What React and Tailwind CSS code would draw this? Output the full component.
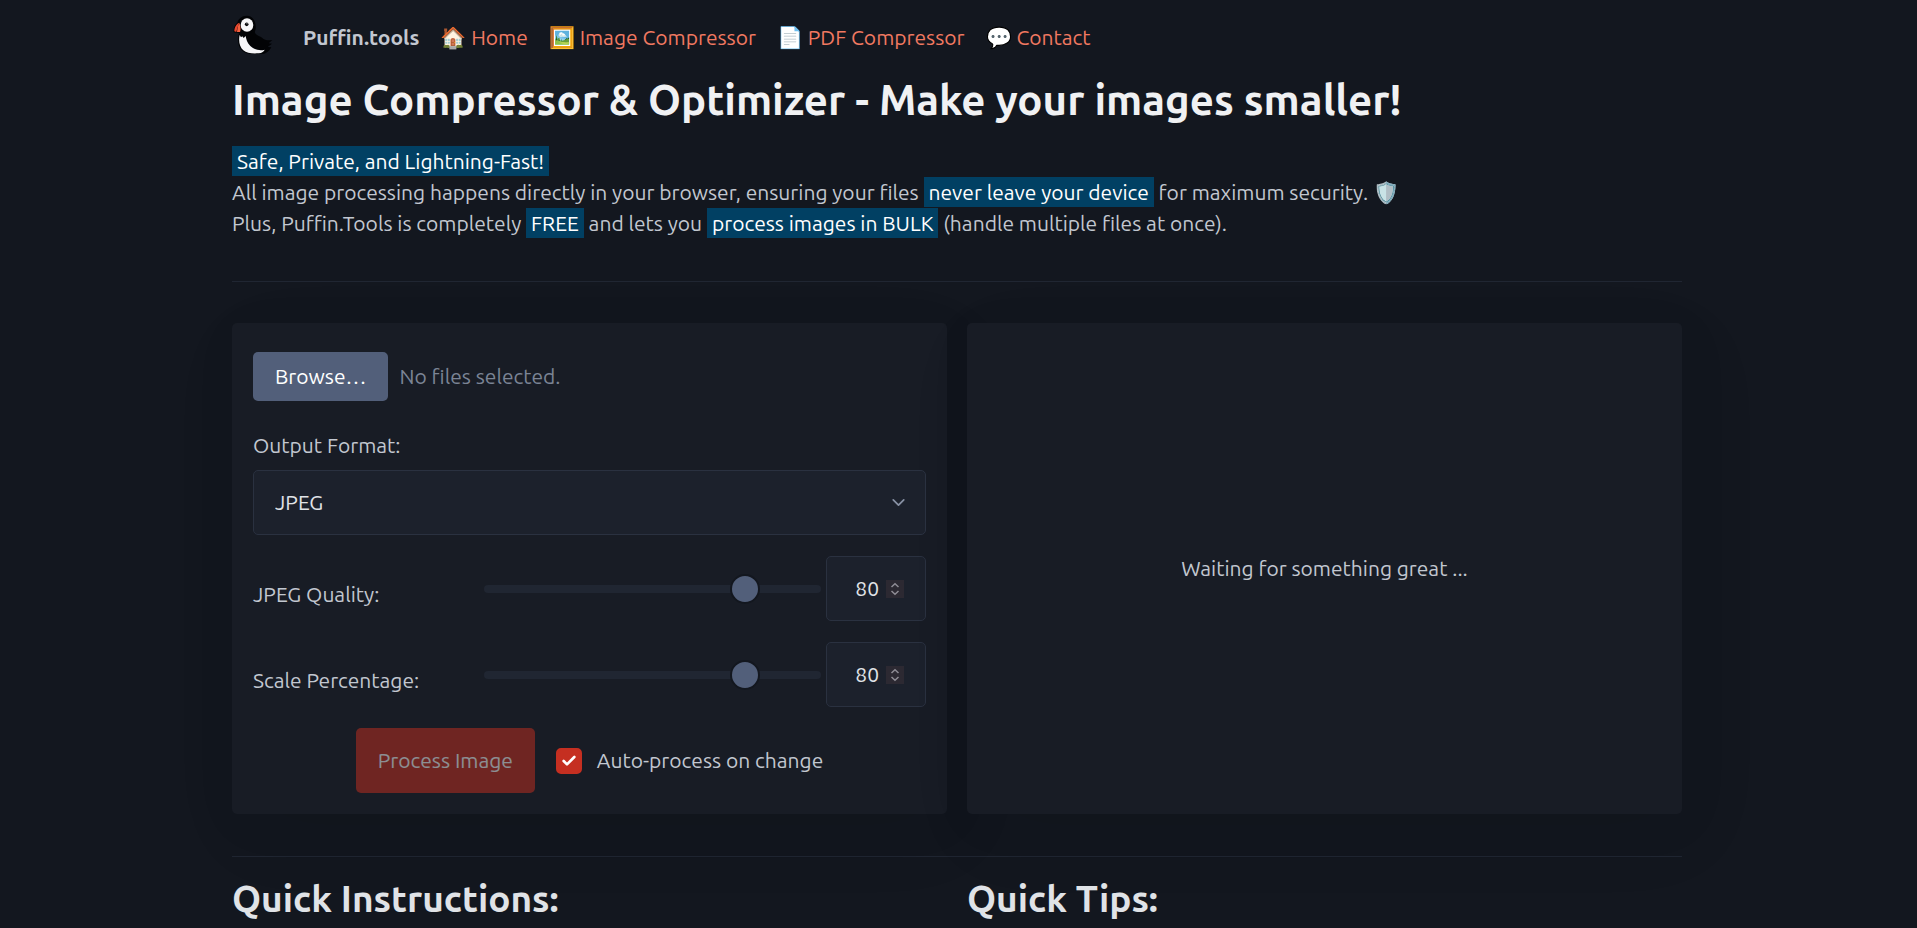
import { useRef, useState } from "react";
import { ChevronDown } from "lucide-react";

const LINKS = [
  { icon: "🏠", label: "Home" },
  { icon: "🖼️", label: "Image Compressor" },
  { icon: "📄", label: "PDF Compressor" },
  { icon: "💬", label: "Contact" },
];

export default function App() {
  const [quality, setQuality] = useState(80);
  const [scale, setScale] = useState(80);
  const fileRef = useRef(null);

  return (
    <div className="min-h-screen bg-[#13171f] pr-[3px] font-[Ubuntu,'Noto_Sans',sans-serif] text-[21px] leading-[31px] text-[#c2c7d0]">
      <div className="mx-auto max-w-[1450px] pt-3">
        <Navbar />

        <main>
          {/* Intro */}
          <section>
            <h1 className="mt-[14px] text-[42px] leading-[47px] font-semibold text-[#f0f1f3]">
              Image Compressor &amp; Optimizer - Make your images smaller!
            </h1>
            <p className="mt-[23px]">
              <Mark>Safe, Private, and Lightning-Fast!</Mark>
              <br />
              All image processing happens directly in your browser, ensuring your files{" "}
              <Mark>never leave your device</Mark> for maximum security. 🛡️
              <br />
              Plus, Puffin.Tools is completely <Mark>FREE</Mark> and lets you{" "}
              <Mark>process images in BULK</Mark> (handle multiple files at once).
            </p>
          </section>

          <hr className="mt-[42px] border-[#202632]" />

          {/* Tool */}
          <section className="mt-[41px] grid grid-cols-2 gap-5">
            <Card>
              <form className="flex flex-col gap-[21px]" onSubmit={(e) => e.preventDefault()}>
                <div className="flex h-[65px] items-center gap-[11px]">
                  <button
                    type="button"
                    onClick={() => fileRef.current.click()}
                    className="h-[49px] rounded-[5px] bg-[#525f7a] px-[22px] text-white"
                  >
                    Browse…
                  </button>
                  <label htmlFor="files" className="text-[#7b8495]">No files selected.</label>
                  <input ref={fileRef} id="files" type="file" multiple className="hidden" />
                </div>

                <div>
                  <label htmlFor="format" className="mb-[9px] block">Output Format:</label>
                  <div className="relative">
                    <select
                      id="format"
                      className="h-[65px] w-full appearance-none rounded-[5px] border border-[#2a3140] bg-[#1c212c] px-[21px] text-[#e0e3e7]"
                    >
                      <option>JPEG</option>
                      <option>PNG</option>
                      <option>WEBP</option>
                    </select>
                    <ChevronDown size={21} className="pointer-events-none absolute top-[22px] right-[17px] text-[#8891a4]" />
                  </div>
                </div>

                <RangeField id="quality" label="JPEG Quality:" value={quality} onChange={setQuality} />
                <RangeField id="scale" label="Scale Percentage:" value={scale} onChange={setScale} />

                <div className="flex items-center justify-center gap-[21px]">
                  <button
                    type="submit"
                    disabled
                    className="h-[65px] rounded-[5px] bg-[#c52f21] px-[22px] text-white opacity-50"
                  >
                    Process Image
                  </button>
                  <div className="flex items-center gap-[15px]">
                    <span className="relative flex">
                      <input
                        id="auto"
                        type="checkbox"
                        defaultChecked
                        className="peer size-[26px] appearance-none rounded-[5px] border-2 border-[#2a3140] bg-[#1c212c] checked:border-[#c52f21] checked:bg-[#c52f21]"
                      />
                      <svg
                        viewBox="0 0 24 24"
                        className="pointer-events-none absolute inset-[5px] hidden size-4 fill-none stroke-white stroke-4 peer-checked:block"
                        strokeLinecap="round"
                        strokeLinejoin="round"
                      >
                        <polyline points="20 6 9 17 4 12" />
                      </svg>
                    </span>
                    <label htmlFor="auto">Auto-process on change</label>
                  </div>
                </div>
              </form>
            </Card>

            <Card>
              <div className="flex h-full items-center justify-center">
                <p>Waiting for something great ...</p>
              </div>
            </Card>
          </section>

          <hr className="mt-[42px] border-[#202632]" />

          {/* Help */}
          <section className="mt-[21px] grid grid-cols-2 gap-5 text-[37px] leading-[42px] text-[#e0e3e7]">
            <h2 className="font-semibold">Quick Instructions:</h2>
            <h2 className="font-semibold">Quick Tips:</h2>
          </section>
        </main>
      </div>
    </div>
  );
}

function Navbar() {
  return (
    <nav className="flex h-[50px] items-center gap-[21px]">
      <PuffinLogo />
      <strong className="font-semibold">Puffin.tools</strong>
      {LINKS.map((link) => (
        <a key={link.label} href="#" className="text-[#f17961]">
          {link.icon} {link.label}
        </a>
      ))}
    </nav>
  );
}

function Mark({ children }) {
  return <mark className="bg-[#014063] px-[5px] py-[3px] text-white">{children}</mark>;
}

function Card({ children }) {
  return (
    <article className="rounded-[5px] bg-[#181c25] p-[21px] shadow-[5px_9px_55px_rgba(7,9,12,0.04),10px_21px_80px_rgba(7,9,12,0.06)]">
      {children}
    </article>
  );
}

function RangeField({ id, label, value, onChange }) {
  const update = (e) => onChange(Number(e.target.value));

  return (
    <div className="flex items-center">
      <label htmlFor={id} className="w-[231px] pt-3">{label}</label>
      <input
        id={id}
        type="range"
        min="0"
        max="100"
        value={value}
        onChange={update}
        className="mr-[5px] h-[30px] min-w-0 flex-1 appearance-none bg-transparent [&::-webkit-slider-runnable-track]:h-2 [&::-webkit-slider-runnable-track]:rounded-[5px] [&::-webkit-slider-runnable-track]:bg-[#202632] [&::-webkit-slider-thumb]:-mt-[11px] [&::-webkit-slider-thumb]:size-[30px] [&::-webkit-slider-thumb]:appearance-none [&::-webkit-slider-thumb]:rounded-full [&::-webkit-slider-thumb]:border-2 [&::-webkit-slider-thumb]:border-[#13171f] [&::-webkit-slider-thumb]:bg-[#525f7a]"
      />
      <div className="flex h-[65px] w-[100px] items-center gap-[7px] rounded-[5px] border border-[#2a3140] bg-[#1c212c] pr-[21px]">
        <input
          type="number"
          aria-label={label}
          value={value}
          onChange={update}
          className="w-0 flex-1 appearance-none text-right text-[#e0e3e7] [-moz-appearance:textfield] [&::-webkit-inner-spin-button]:appearance-none"
        />
        <svg viewBox="0 0 18 18" className="size-[18px] bg-[#2c2932] fill-none stroke-[#8f8d95] stroke-[1.5]">
          <path d="M5.5 7 9 3.8 12.5 7M5.5 11 9 14.2 12.5 11" />
        </svg>
      </div>
    </div>
  );
}

function PuffinLogo() {
  return (
    <svg viewBox="12 6 150 150" className="size-[50px]" aria-label="Puffin.tools logo">
      {/* body, wing and tail */}
      <path
        d="M57 17C40 17 31 27 28 38 20 44 16 54 17 67L33 69C28 84 29 104 38 117 48 130 64 133 82 132H104C116 131 124 122 130 112L119 111 132 101 122 100 133 90C120 92 110 91 102 83 94 77 84 77 80 66 88 52 82 17 57 17Z"
        fill="#020305"
      />
      {/* belly */}
      <path
        d="M35 75C31 92 34 110 46 121 56 130 72 131 92 130 102 129 108 124 110 119 96 123 78 119 67 108 57 98 55 88 53 78L47 84 43 79 39 82Z"
        fill="#f6f6f8"
      />
      {/* head */}
      <ellipse cx="57" cy="45" rx="19" ry="20" fill="#f6f6f8" />
      <circle cx="56" cy="43" r="5.5" fill="#020305" />
      <circle cx="57" cy="41" r="1.5" fill="#f6f6f8" />
      {/* beak */}
      <path d="M34 38C25 42 19 52 19 64L25 66C28 54 30 46 34 38Z" fill="#e8472f" />
      <path d="M34 38C30 46 28 54 27 66H36C39 58 37 46 34 38Z" fill="#f4603f" />
    </svg>
  );
}
